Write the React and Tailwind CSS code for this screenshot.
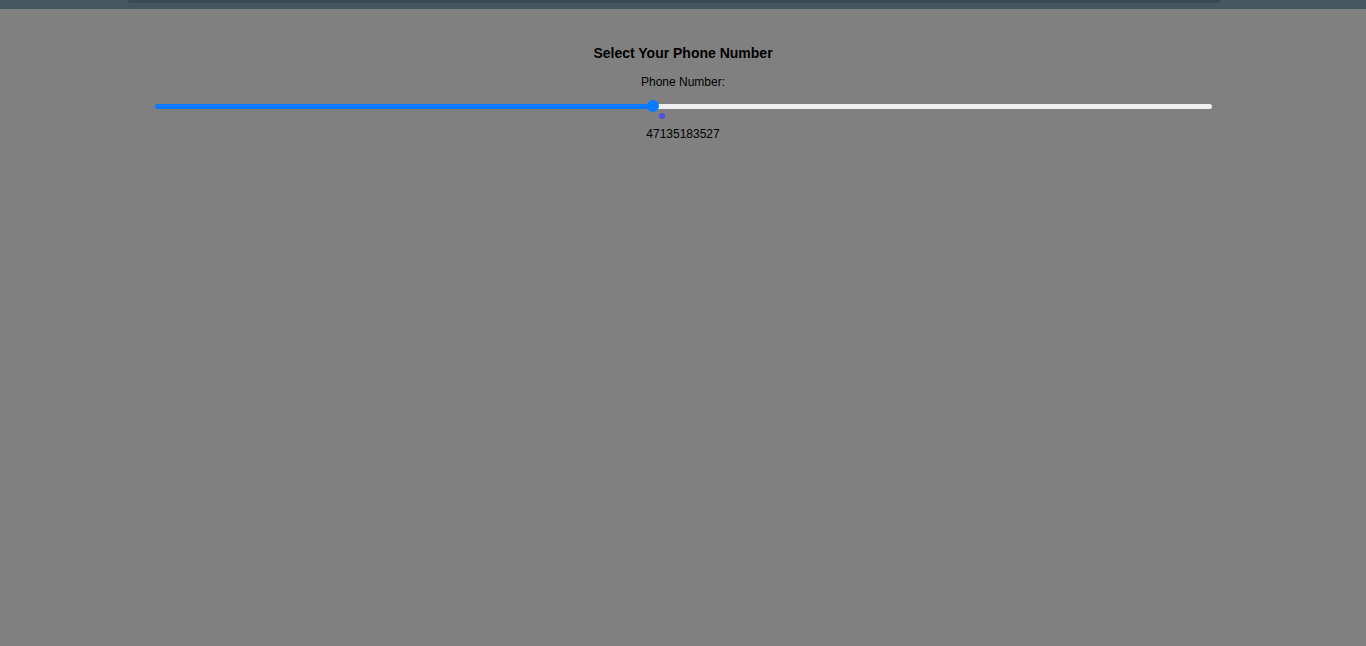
export default function App() {
  return (
    <div className="min-h-screen bg-[#808080] font-['Liberation_Sans',Arial,sans-serif] text-black">
      {/* top strip */}
      <div className="h-[9px] bg-[#45565f] px-[128px]">
        <div className="h-[3px] w-[1092px] rounded-b-md bg-[#3b4a52]"></div>
      </div>

      <div className="mx-auto flex w-[1057px] flex-col items-center pt-[35px]">
        <h2 className="text-[14px] font-bold leading-[18px]">Select Your Phone Number</h2>
        <p className="mt-[12px] text-[12px] leading-[16px]">Phone Number:</p>

        {/* slider */}
        <div className="relative mt-[14px] flex h-[5px] w-full">
          <div className="h-full w-[498px] rounded-l-full bg-[#0a7bff]"></div>
          <div className="h-full flex-1 rounded-r-full bg-[#efefef]"></div>
          <div className="absolute left-[492px] top-[-4px] h-[12px] w-[12px] rounded-full bg-[#0a7bff]"></div>
          <div className="absolute left-[504px] top-[9px] h-[6px] w-[6px] rounded-full bg-[#4f4fe0]"></div>
        </div>

        <p className="mt-[17px] text-[12px] leading-[16px]">47135183527</p>
      </div>
    </div>
  );
}
